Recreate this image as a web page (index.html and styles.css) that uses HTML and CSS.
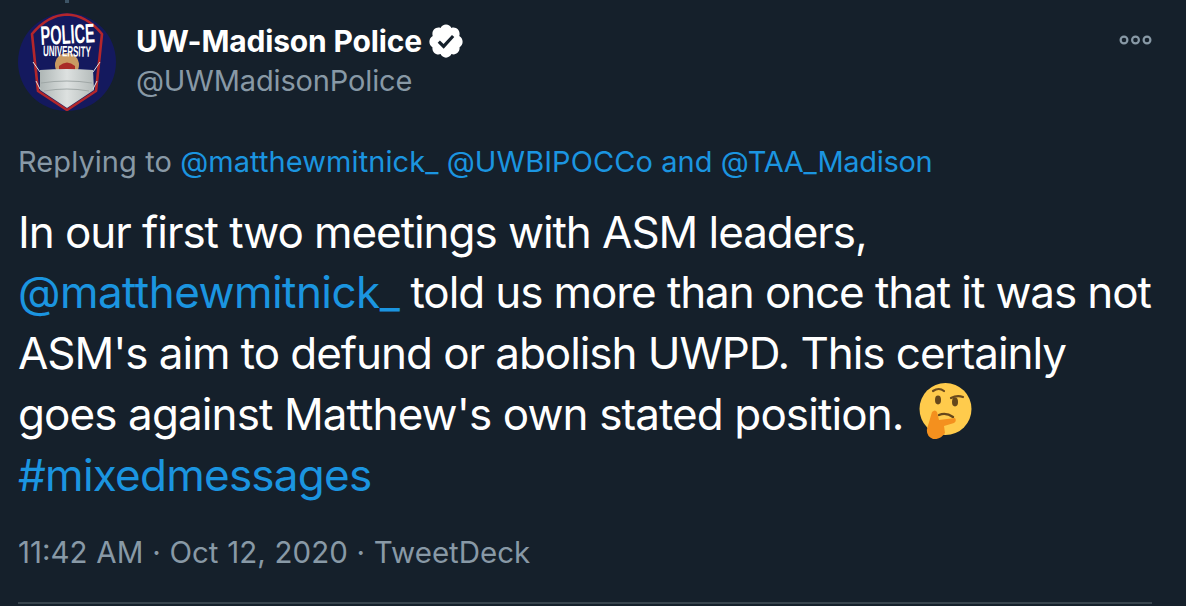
FILE: index.html
```html
<!DOCTYPE html>
<html lang="en">
<head>
<meta charset="utf-8">
<title>UW-Madison Police tweet</title>
<link rel="stylesheet" href="styles.css">
</head>
<body>
<article class="tweet">
  <span class="thread-line"></span>
  <header class="head">
    <svg class="avatar" viewBox="0 0 98 98" width="98" height="98" aria-hidden="true">
      <defs>
        <linearGradient id="maskfill" x1="0" y1="0" x2="1" y2="0">
          <stop offset="0" stop-color="#aeb6b5"/>
          <stop offset="0.5" stop-color="#dde1e0"/>
          <stop offset="1" stop-color="#b4bbba"/>
        </linearGradient>
      </defs>
      <circle cx="49" cy="49" r="49" fill="#14195e"/>
      <path d="M14 21 Q30 2 49 1.5 Q68 2 84 21 L78 78 L49 97 L20 78 Z" fill="none" stroke="#b3262b" stroke-width="2.6" stroke-linejoin="round"/>
      <circle cx="49" cy="52" r="12" fill="#c99a62"/>
      <path d="M41 58 V53 Q49 46 57 53 V58 Z" fill="#a92b27"/>
      <text class="logo-a" transform="translate(23 32) rotate(-3) scale(0.54 1)">POLICE</text>
      <text class="logo-b" transform="translate(25 43) rotate(1) scale(0.53 1)">UNIVERSITY</text>
      <path d="M22 57 Q49 55 75 57 L76 77 L49 95 L22 77 Z" fill="url(#maskfill)"/>
      <path d="M23 70 Q49 66 74 70 M26 78 Q49 74 71 78" fill="none" stroke="#a0a8a7" stroke-width="1.2"/>
      <path d="M22 59 L15 49 M75 59 L82 49 M22 76 L18 68 M75 76 L79 68" stroke="#dfe3e3" stroke-width="1"/>
    </svg>
    <div class="names">
      <div class="name-row">
        <span class="name">UW-Madison Police</span>
        <svg class="badge" viewBox="0 0 24 24" width="38" height="38" aria-hidden="true">
          <path fill="#fff" d="M22.5 12.5c0-1.58-.875-2.95-2.148-3.6.154-.435.238-.905.238-1.4 0-2.21-1.71-3.998-3.818-3.998-.47 0-.92.084-1.336.25C14.818 2.415 13.51 1.5 12 1.5s-2.816.917-3.437 2.25c-.415-.165-.866-.25-1.336-.25-2.11 0-3.818 1.79-3.818 4 0 .494.083.964.237 1.4-1.272.65-2.147 2.018-2.147 3.6 0 1.495.782 2.798 1.942 3.486-.02.17-.032.34-.032.514 0 2.21 1.708 4 3.818 4 .47 0 .92-.086 1.335-.25.62 1.334 1.926 2.25 3.437 2.25 1.512 0 2.818-.916 3.437-2.25.415.163.865.248 1.336.248 2.11 0 3.818-1.79 3.818-4 0-.174-.012-.344-.033-.513 1.158-.687 1.943-1.99 1.943-3.484z"/>
          <path fill="#15202b" d="M10.54 16.84 6.75 13.05l1.4-1.42 2.32 2.33 5.3-5.76 1.47 1.35z"/>
        </svg>
      </div>
      <div class="handle">@UWMadisonPolice</div>
    </div>
    <svg class="more" viewBox="0 0 34 10" width="34" height="10" aria-hidden="true">
      <circle cx="6" cy="5" r="3.4"/><circle cx="17.5" cy="5" r="3.4"/><circle cx="29" cy="5" r="3.4"/>
    </svg>
  </header>
  <p class="replying">Replying to <a>@matthewmitnick_</a> <a>@UWBIPOCCo</a> <a>and</a> <a class="last-mention">@TAA_Madison</a></p>
  <p class="body">In our first two meetings with ASM leaders,<br><a>@matthewmitnick_</a> <span class="line-tight">told us more than once that it was not</span><br>ASM's aim to defund or abolish UWPD. This certainly<br><span class="line-loose">goes against Matthew's own stated position.</span><svg class="emoji" viewBox="0 0 54 56" width="54" height="56" aria-hidden="true">
      <circle cx="26.5" cy="26" r="26" fill="#ffcb4c"/>
      <path d="M14 8 Q20 4 25 8" fill="none" stroke="#6b4a1e" stroke-width="2.2" stroke-linecap="round"/>
      <path d="M32 15 Q38 12 44 14" fill="none" stroke="#6b4a1e" stroke-width="2.2" stroke-linecap="round"/>
      <ellipse cx="19" cy="17" rx="3" ry="4.4" fill="#65471b"/>
      <ellipse cx="36" cy="19" rx="3" ry="4.4" fill="#65471b"/>
      <path d="M20 32 Q27 29 34 34" fill="none" stroke="#65471b" stroke-width="2.4" stroke-linecap="round"/>
      <path d="M13 29 Q16 26 18 29 L20 37 L36 35 Q38 38 35 40 L25 43 L26 50 Q21 57 14 56 Q7 53 8 46 Z" fill="#f4901e"/>
    </svg><br><a class="tag">#mixedmessages</a></p>
  <footer class="meta">11:42 AM · Oct 12, 2020 · TweetDeck</footer>
  <hr class="rule">
</article>
</body>
</html>
```
FILE: styles.css
```css
html, body {
  margin: 0;
  height: 606px;
  overflow: hidden;
  background: #15202b;
}
.tweet {
  position: relative;
  box-sizing: border-box;
  height: 606px;
  padding: 13px 34px 0 18px;
  font-family: Inter, "Liberation Sans", sans-serif;
  color: #fff;
}
.thread-line {
  position: absolute;
  left: 65px;
  top: 0;
  width: 4px;
  height: 3px;
  background: #3d5466;
}
.head {
  display: flex;
  align-items: flex-start;
  height: 98px;
}
.avatar { flex: none; }
.logo-a { font: 700 27px "Liberation Sans", sans-serif; fill: #fff; }
.logo-b { font: 700 15px "Liberation Sans", sans-serif; fill: #fff; }
.names {
  flex: 1;
  margin-left: 20px;
  padding-top: 8px;
}
.name-row {
  display: flex;
  align-items: center;
  gap: 5px;
  height: 40px;
}
.name {
  font-size: 30px;
  font-weight: 700;
  line-height: 40px;
  letter-spacing: -0.16px;
}
.badge { flex: none; }
.handle {
  font-size: 29px;
  line-height: 40px;
  color: #8899a6;
  letter-spacing: -0.14px;
}
.more {
  flex: none;
  margin-top: 22px;
  fill: none;
  stroke: #8899a6;
  stroke-width: 2.2;
}
.replying {
  margin: 32px 0 0;
  font-size: 29px;
  line-height: 38px;
  color: #8899a6;
  letter-spacing: 0.08px;
}
a { color: #1b95e0; }
.last-mention { letter-spacing: -0.3px; }
.body {
  margin: 20.5px 0 0;
  font-size: 44px;
  line-height: 60.8px;
  letter-spacing: -1.06px;
  white-space: nowrap;
}
.body a { letter-spacing: -0.55px; }
.body a.tag { letter-spacing: -0.75px; }
.line-tight { letter-spacing: -1.1px; }
.line-loose { letter-spacing: -0.9px; }
.emoji {
  vertical-align: 1px;
  margin: -10px 0 -10px 15px;
}
.meta {
  margin-top: 28px;
  font-size: 29.5px;
  line-height: 38px;
  color: #8899a6;
  word-spacing: 0.5px;
}
.rule {
  position: absolute;
  left: 18px;
  right: 34px;
  top: 602px;
  margin: 0;
  border: 0;
  height: 2px;
  background: #38444d;
}
```
